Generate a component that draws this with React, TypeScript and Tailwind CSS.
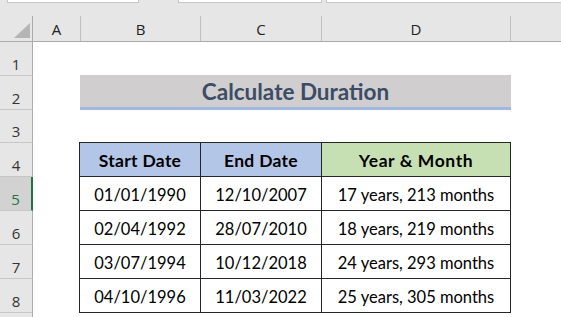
import React from "react";

const COLS = "grid grid-cols-[33px_47px_120px_121px_189px_1fr]";

const rows = [
  { start: "01/01/1990", end: "12/10/2007", dur: "17 years, 213 months" },
  { start: "02/04/1992", end: "28/07/2010", dur: "18 years, 219 months" },
  { start: "03/07/1994", end: "10/12/2018", dur: "24 years, 293 months" },
  { start: "04/10/1996", end: "11/03/2022", dur: "25 years, 305 months" },
];

const rowStarts = [
  "row-start-1",
  "row-start-2",
  "row-start-3",
  "row-start-4",
  "row-start-5",
  "row-start-6",
  "row-start-7",
  "row-start-8",
  "row-start-9",
];

function RowHeader({ n }: { n: number }) {
  const selected = n === 5;
  return (
    <div
      className={`${rowStarts[n - 1]} col-start-1 flex items-center justify-center pt-[11px] border-b border-[#c6c6c6] text-[15px] leading-[15px] ${
        selected
          ? "bg-[#d2d2d2] text-[#217346] border-r-2 border-r-[#217346]"
          : "bg-[#e6e6e6] text-[#333333] border-r border-r-[#ababab]"
      }`}
    >
      {n <= 8 ? n : ""}
    </div>
  );
}

export default function App() {
  return (
    <div className="w-[561px] h-[317px] overflow-hidden bg-white font-['Lato',sans-serif] text-black">
      {/* formula bar remnants */}
      <div className="h-4 bg-[#e6e6e6] flex items-start">
        <div className="ml-[7px] w-[132px] h-[3px] bg-white border-x border-b border-[#c6c6c6]" />
        <div className="ml-[39px] w-[144px] h-[3px] bg-white border-x border-b border-[#c6c6c6]" />
        <div className="ml-[4px] flex-1 h-[3px] bg-white border-l border-b border-[#c6c6c6]" />
      </div>

      {/* column headers */}
      <div
        className={`${COLS} h-[26px] bg-[#e6e6e6] border-b border-[#ababab] font-['Open_Sans',sans-serif] text-[15px] text-[#222222]`}
      >
        <div className="flex items-end justify-end pr-[2px] pb-[3px] border-r border-[#ababab]">
          <svg width="16" height="15" viewBox="0 0 16 15">
            <polygon points="16,0 16,15 0,15" fill="#b5b5b5" />
          </svg>
        </div>
        <div className="flex items-center justify-center pt-[2px]">A</div>
        <div className="flex items-center justify-center pt-[2px] border-l border-[#bfbfbf]">B</div>
        <div className="flex items-center justify-center pt-[2px] border-l border-[#bfbfbf]">C</div>
        <div className="flex items-center justify-center pt-[2px] border-l border-[#bfbfbf]">D</div>
        <div className="border-l border-[#bfbfbf]" />
      </div>

      {/* sheet body */}
      <div
        className={`${COLS} grid-rows-[34px_34px_33px_34px_34px_34px_34px_34px_1fr] h-[275px] font-['Open_Sans',sans-serif]`}
      >
        {[1, 2, 3, 4, 5, 6, 7, 8, 9].map((n) => (
          <RowHeader key={n} n={n} />
        ))}

        {/* title */}
        <div className="row-start-2 col-start-3 col-span-3 -mt-px -mr-px h-[35px] self-start flex items-center justify-center pt-[2px] bg-[#d0cece] border-b-[3px] border-[#a2b8e1] font-['Lato',sans-serif] font-bold text-[22.5px] text-[#3b4c66]">
          Calculate Duration
        </div>

        {/* data table */}
        <div className="row-start-4 row-span-5 col-start-3 col-span-3 -mt-px -ml-px -mr-px border-t border-[#262626] grid grid-cols-[121px_121px_190px] grid-rows-[34px_34px_34px_34px_34px] font-['Lato',sans-serif] text-[16.5px]">
          <div className="flex items-center justify-center pt-[3px] font-bold text-[17.5px] tracking-[0.3px] bg-[#b4c6e7] border-l border-b border-[#262626]">
            Start Date
          </div>
          <div className="flex items-center justify-center pt-[3px] font-bold text-[17.5px] tracking-[0.3px] bg-[#b4c6e7] border-l border-b border-[#262626]">
            End Date
          </div>
          <div className="flex items-center justify-center pt-[3px] font-bold text-[17.5px] tracking-[0.6px] bg-[#c6e0b4] border-l border-r border-b border-[#262626]">
            Year &amp; Month
          </div>
          {rows.map((r) => (
            <React.Fragment key={r.start}>
              <div className="flex items-center justify-center pt-[3px] border-l border-b border-[#262626]">
                {r.start}
              </div>
              <div className="flex items-center justify-center pt-[3px] border-l border-b border-[#262626]">
                {r.end}
              </div>
              <div className="flex items-center justify-center pt-[3px] border-l border-r border-b border-[#262626]">
                {r.dur}
              </div>
            </React.Fragment>
          ))}
        </div>
      </div>
    </div>
  );
}
